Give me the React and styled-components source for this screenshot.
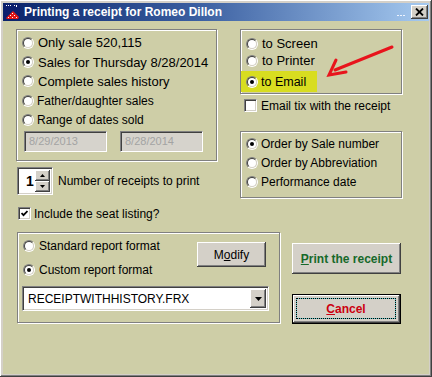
import React from 'react';
import styled, { createGlobalStyle } from 'styled-components';

const KHAKI = '#cecea7';
const FACE = '#d4d0c8';

const Global = createGlobalStyle`
  html, body { margin: 0; padding: 0; background: ${FACE}; }
  body { font-family: "Liberation Sans", Arial, sans-serif; color: #000; }
  * { box-sizing: border-box; }
`;

const Window = styled.div`
  width: 432px;
  height: 377px;
  background: ${FACE};
  padding: 3px;
  display: flex;
  flex-direction: column;
  box-shadow: inset -1px -1px #404040, inset 1px 1px #ffffff, inset -2px -2px #808080;
`;

const TitleBar = styled.div`
  height: 18px;
  flex: none;
  display: flex;
  align-items: center;
  padding: 0 1px 0 1px;
  background: linear-gradient(to right, #0a246a 0%, #3a5ea0 45%, #a6caf0 100%);
`;

const TitleText = styled.span`
  margin-left: 4px;
  flex: 1;
  color: #fff;
  font-weight: bold;
  font-size: 12px;
  white-space: nowrap;
`;

const Dots = styled.span`
  align-self: flex-end;
  margin: 0 6px 5px 0;
  display: flex;
  gap: 1px;
  & > i { width: 2px; height: 1px; background: #eef4ff; display: block; }
`;

const CloseBtn = styled.div`
  width: 17px;
  height: 14px;
  background: ${FACE};
  box-shadow: inset -1px -1px #404040, inset 1px 1px #fff, inset -2px -2px #808080;
  display: flex;
  align-items: center;
  justify-content: center;
`;

const Body = styled.div`
  flex: 1;
  background: ${KHAKI};
  position: relative;
  padding: 8px 0 0 13px;
  display: flex;
  flex-direction: column;
`;

const Row = styled.div`
  display: flex;
  align-items: flex-start;
`;

const Column = styled.div`
  display: flex;
  flex-direction: column;
  width: ${(p) => p.$w}px;
  margin-left: ${(p) => p.$ml || 0}px;
  margin-top: ${(p) => p.$mt || 0}px;
  flex: none;
`;

const Group = styled.div`
  width: ${(p) => p.$w}px;
  height: ${(p) => p.$h}px;
  margin-top: ${(p) => p.$mt || 0}px;
  margin-left: ${(p) => p.$ml || 0}px;
  padding-top: ${(p) => p.$pt || 0}px;
  border: 1px solid #808080;
  box-shadow: inset 1px 1px #fff, 1px 1px #fff;
  display: flex;
  flex-direction: column;
  flex: none;
`;

const OptionRow = styled.label`
  display: flex;
  align-items: center;
  height: ${(p) => p.$h}px;
  padding-left: ${(p) => (p.$pl === undefined ? 5 : p.$pl)}px;
  margin-top: ${(p) => p.$mt || 0}px;
  width: ${(p) => (p.$w ? `${p.$w}px` : 'auto')};
  background: ${(p) => p.$bg || 'transparent'};
  gap: ${(p) => (p.$gap === undefined ? 4 : p.$gap)}px;
  font-size: ${(p) => p.$fs || 13}px;
  white-space: nowrap;
`;

const RadioOuter = styled.span`
  width: 12px;
  height: 12px;
  flex: none;
  border-radius: 50%;
  border: 1px solid;
  border-color: #808080 #ffffff #ffffff #808080;
  display: flex;
  align-items: center;
  justify-content: center;
`;

const RadioInner = styled.span`
  width: 10px;
  height: 10px;
  border-radius: 50%;
  border: 1px solid;
  border-color: #404040 ${FACE} ${FACE} #404040;
  background: #fff;
  display: flex;
  align-items: center;
  justify-content: center;
  &::after {
    content: '';
    width: 4px;
    height: 4px;
    border-radius: 50%;
    background: ${(p) => (p.$on ? '#000' : 'transparent')};
  }
`;

const Radio = ({ on }) => (
  <RadioOuter>
    <RadioInner $on={on} />
  </RadioOuter>
);

const CheckBoxBox = styled.span`
  width: 13px;
  height: 13px;
  flex: none;
  background: #fff;
  border: 1px solid;
  border-color: #808080 #ffffff #ffffff #808080;
  box-shadow: inset 1px 1px #404040, inset -1px -1px ${FACE};
  display: flex;
  align-items: center;
  justify-content: center;
`;

const CheckBox = ({ on }) => (
  <CheckBoxBox>
    {on && (
      <svg width="7" height="7" viewBox="0 0 7 7">
        <polyline points="0.5,3 2.5,5.2 6.5,1" fill="none" stroke="#000" strokeWidth="1.8" />
      </svg>
    )}
  </CheckBoxBox>
);

const CheckRow = styled.label`
  display: flex;
  align-items: center;
  height: 13px;
  margin-top: ${(p) => p.$mt}px;
  margin-left: ${(p) => p.$ml}px;
  gap: ${(p) => p.$gap}px;
  font-size: 12px;
  white-space: nowrap;
`;

const DatesRow = styled.div`
  display: flex;
  gap: 13px;
  padding-left: 7px;
  margin-top: 1px;
`;

const DateField = styled.div`
  width: 83px;
  height: 21px;
  background: #d6d3cc;
  border: 1px solid;
  border-color: #808080 #ffffff #ffffff #808080;
  box-shadow: inset 1px 1px #404040, inset -1px -1px ${FACE};
  color: #a3a3a3;
  font-size: 11px;
  display: flex;
  align-items: center;
  padding-left: 4px;
`;

const SpinRow = styled.div`
  display: flex;
  align-items: center;
  gap: 5px;
  margin: 6px 0 0 1px;
  font-size: 12px;
  white-space: nowrap;
`;

const Spinner = styled.div`
  width: 36px;
  height: 28px;
  background: #fff;
  border: 1px solid;
  border-color: #808080 #ffffff #ffffff #808080;
  box-shadow: inset 1px 1px #404040, inset -1px -1px ${FACE};
  display: flex;
  padding: 2px;
`;

const SpinValue = styled.span`
  flex: 1;
  font-weight: bold;
  font-size: 14px;
  display: flex;
  align-items: center;
  padding-left: 6px;
`;

const SpinButtons = styled.div`
  width: 15px;
  display: flex;
  flex-direction: column;
`;

const SpinBtn = styled.div`
  flex: 1;
  background: ${FACE};
  box-shadow: inset -1px -1px #404040, inset 1px 1px #fff, inset -2px -2px #808080;
  display: flex;
  align-items: center;
  justify-content: center;
`;

const Arrow = ({ dir }) => (
  <svg width="5" height="3" viewBox="0 0 5 3">
    <polygon points={dir === 'up' ? '2.5,0 5,3 0,3' : '0,0 5,0 2.5,3'} fill="#000" />
  </svg>
);

const ReportTop = styled.div`
  display: flex;
  align-items: flex-start;
`;

const RadioStack = styled.div`
  flex: 1;
  display: flex;
  flex-direction: column;
  padding-top: 1px;
`;

const Button = styled.button`
  font-family: "Liberation Sans", Arial, sans-serif;
  font-size: 12px;
  font-weight: ${(p) => (p.$bold ? 'bold' : 'normal')};
  color: ${(p) => p.$color || '#000'};
  width: ${(p) => p.$w}px;
  height: ${(p) => p.$h}px;
  margin-top: ${(p) => p.$mt || 0}px;
  margin-right: ${(p) => p.$mr || 0}px;
  background: ${FACE};
  border: none;
  padding: 0;
  flex: none;
  box-shadow: inset -1px -1px #404040, inset 1px 1px #fff, inset -2px -2px #808080;
  display: flex;
  align-items: center;
  justify-content: center;
  & u { text-decoration-thickness: 1px; text-underline-offset: 1px; }
`;

const DefaultButton = styled(Button)`
  border: 1px solid #000;
  padding: 3px 4px 4px 3px;
`;

const FocusRect = styled.span`
  flex: 1;
  align-self: stretch;
  display: flex;
  align-items: center;
  justify-content: center;
  border: 1px dotted #000;
  background: linear-gradient(${FACE}, ${FACE}) padding-box, #5cc8c8 border-box;
`;

const Combo = styled.div`
  width: 247px;
  height: 25px;
  margin: 4px 0 0 4px;
  background: #fff;
  border: 1px solid;
  border-color: #808080 #ffffff #ffffff #808080;
  box-shadow: inset 1px 1px #404040, inset -1px -1px ${FACE};
  display: flex;
  padding: 2px;
  font-size: 12px;
`;

const ComboText = styled.span`
  flex: 1;
  display: flex;
  align-items: center;
  padding-left: 3px;
`;

const ComboBtn = styled.div`
  width: 16px;
  background: ${FACE};
  box-shadow: inset -1px -1px #404040, inset 1px 1px #fff, inset -2px -2px #808080;
  display: flex;
  align-items: center;
  justify-content: center;
`;

const Annotation = styled.svg`
  position: absolute;
  left: 320px;
  top: 20px;
  pointer-events: none;
`;

const AppIcon = () => (
  <svg width="16" height="16" viewBox="0 0 16 16" style={{ flex: 'none' }}>
    <rect width="16" height="16" fill="#0c1f6e" />
    <g fill="#fff">
      <rect x="2" y="1" width="1" height="1" />
      <rect x="4" y="1" width="1" height="1" />
      <rect x="6" y="1" width="1" height="1" />
      <rect x="10" y="1" width="1" height="1" />
      <rect x="12" y="1" width="1" height="2" />
    </g>
    <path d="M2 14 L6 10 L9 7 L12 10 L15 13 L14 15 L3 15 Z" fill="#e01818" />
    <g fill="#fff">
      <rect x="8" y="9" width="1" height="1" />
      <rect x="6" y="11" width="1" height="1" />
      <rect x="10" y="11" width="1" height="1" />
      <rect x="4" y="13" width="1" height="1" />
      <rect x="8" y="13" width="1" height="1" />
      <rect x="12" y="13" width="1" height="1" />
    </g>
  </svg>
);

export default function App() {
  return (
    <>
      <Global />
      <Window>
        <TitleBar>
          <AppIcon />
          <TitleText>Printing a receipt for Romeo Dillon</TitleText>
          <Dots>
            <i />
            <i />
            <i />
          </Dots>
          <CloseBtn>
            <svg width="9" height="8" viewBox="0 0 9 8">
              <path d="M1 0.5 L8 7.5 M8 0.5 L1 7.5" stroke="#000" strokeWidth="1.8" />
            </svg>
          </CloseBtn>
        </TitleBar>
        <Body>
          <Row>
            <Column $w={201}>
              <Group $w={201} $h={132} $pt={3}>
                <OptionRow $h={19.4}><Radio />Only sale 520,115</OptionRow>
                <OptionRow $h={19.4}><Radio on />Sales for Thursday 8/28/2014</OptionRow>
                <OptionRow $h={19.4}><Radio />Complete sales history</OptionRow>
                <OptionRow $h={19.4} $fs={12} $gap={3}><Radio />Father/daughter sales</OptionRow>
                <OptionRow $h={19.4} $fs={12} $gap={3}><Radio />Range of dates sold</OptionRow>
                <DatesRow>
                  <DateField>8/29/2013</DateField>
                  <DateField>8/28/2014</DateField>
                </DatesRow>
              </Group>
              <SpinRow>
                <Spinner>
                  <SpinValue>1</SpinValue>
                  <SpinButtons>
                    <SpinBtn><Arrow dir="up" /></SpinBtn>
                    <SpinBtn><Arrow dir="down" /></SpinBtn>
                  </SpinButtons>
                </Spinner>
                Number of receipts to print
              </SpinRow>
              <CheckRow $mt={12} $ml={2} $gap={3}>
                <CheckBox on />
                Include the seat listing?
              </CheckRow>
            </Column>
            <Column $w={162} $ml={23}>
              <Group $w={162} $h={65} $pt={5}>
                <OptionRow $h={17}><Radio />to Screen</OptionRow>
                <OptionRow $h={17}><Radio />to Printer</OptionRow>
                <OptionRow $h={21} $mt={2} $w={76} $bg="#d8dd20" $gap={3} $fs={12.5}>
                  <Radio on />to Email
                </OptionRow>
              </Group>
              <CheckRow $mt={5} $ml={4} $gap={4}>
                <CheckBox />
                Email tix with the receipt
              </CheckRow>
              <Group $w={162} $h={67} $pt={2} $mt={19}>
                <OptionRow $h={19.2} $gap={3} $fs={12}><Radio on />Order by Sale number</OptionRow>
                <OptionRow $h={19.2} $gap={3} $fs={12}><Radio />Order by Abbreviation</OptionRow>
                <OptionRow $h={19.2} $gap={3} $fs={12}><Radio />Performance date</OptionRow>
              </Group>
            </Column>
          </Row>
          <Row>
            <Group $w={263} $h={91} $mt={12} $ml={1}>
              <ReportTop>
                <RadioStack>
                  <OptionRow $h={24} $fs={12}><Radio />Standard report format</OptionRow>
                  <OptionRow $h={24} $fs={12}><Radio on />Custom report format</OptionRow>
                </RadioStack>
                <Button $w={69} $h={25} $mt={9} $mr={13}>
                  M<u>o</u>dify
                </Button>
              </ReportTop>
              <Combo>
                <ComboText>RECEIPTWITHHISTORY.FRX</ComboText>
                <ComboBtn>
                  <svg width="7" height="4" viewBox="0 0 7 4">
                    <polygon points="0,0 7,0 3.5,4" fill="#000" />
                  </svg>
                </ComboBtn>
              </Combo>
            </Group>
            <Column $w={109} $ml={12} $mt={12}>
              <Button $w={109} $h={31} $mt={11} $bold $color="#17692b">
                <u>P</u>rint the receipt
              </Button>
              <DefaultButton $w={109} $h={30} $mt={20} $bold $color="#cc0010">
                <FocusRect>
                  <u>C</u>ancel
                </FocusRect>
              </DefaultButton>
            </Column>
          </Row>
          <Annotation width="76" height="40" viewBox="0 0 76 40">
            <line x1="69" y1="6" x2="12" y2="29" stroke="#e8141c" strokeWidth="3" strokeLinecap="round" />
            <polyline points="13,19 6,34 23,31" fill="none" stroke="#e8141c" strokeWidth="3" strokeLinejoin="miter" strokeLinecap="round" />
          </Annotation>
        </Body>
      </Window>
    </>
  );
}
